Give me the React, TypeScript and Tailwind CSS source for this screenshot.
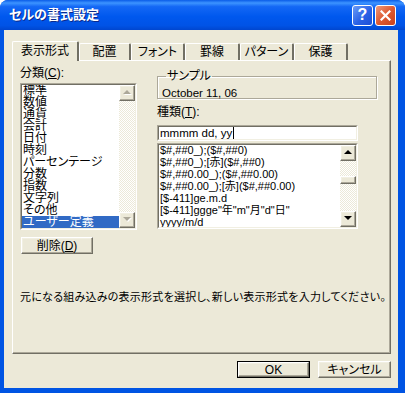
import React from 'react';

const categories = ['標準', '数値', '通貨', '会計', '日付', '時刻', 'パーセンテージ', '分数', '指数', '文字列', 'その他', 'ユーザー定義'];

const formats = [
  '$#,##0_);($#,##0)',
  '$#,##0_);[赤]($#,##0)',
  '$#,##0.00_);($#,##0.00)',
  '$#,##0.00_);[赤]($#,##0.00)',
  '[$-411]ge.m.d',
  '[$-411]ggge"年"m"月"d"日"',
  'yyyy/m/d',
];

const tabs = [
  { label: '配置', w: 'w-[52px]' },
  { label: 'フォント', w: 'w-[54px]' },
  { label: '罫線', w: 'w-[55px]' },
  { label: 'パターン', w: 'w-[54px]' },
  { label: '保護', w: 'w-[54px]' },
];

const raised =
  'bg-[#ECE9D8] border border-t-white border-l-white border-r-[#716F64] border-b-[#716F64] shadow-[inset_-1px_-1px_0_#ACA899,inset_1px_1px_0_#F1EFE2]';

const Arrow = ({ up, disabled }: { up?: boolean; disabled?: boolean }) => (
  <svg width="9" height="6" viewBox="0 0 9 6">
    {disabled && <polygon points={up ? '5,1 9,5 1,5' : '1,1 9,1 5,5'} fill="#ffffff" />}
    <polygon points={up ? '4,0 8,4 0,4' : '0,0 8,0 4,4'} fill={disabled ? '#ACA899' : '#000000'} />
  </svg>
);

const ScrollButton = ({ up, disabled }: { up?: boolean; disabled?: boolean }) => (
  <div className={`${raised} w-[16px] h-[16px] flex items-center justify-center`}>
    <Arrow up={up} disabled={disabled} />
  </div>
);

// classic two-line sunken frame
const Sunken = ({ className, children }: { className: string; children: React.ReactNode }) => (
  <div className={`border border-t-[#ACA899] border-l-[#ACA899] border-r-white border-b-white ${className}`}>
    <div className="w-full h-full border border-t-[#716F64] border-l-[#716F64] border-r-[#F1EFE2] border-b-[#F1EFE2] bg-white flex overflow-hidden">
      {children}
    </div>
  </div>
);

const Track = ({ className }: { className: string }) => (
  <div className={`bg-[repeating-conic-gradient(#ffffff_0%_25%,#ECE9D8_0%_50%)] bg-[length:2px_2px] ${className}`} />
);

export default function App() {
  return (
    <div className="w-[405px] h-[393px] bg-[#0054E3] rounded-t-[8px] flex flex-col overflow-hidden font-['Liberation_Sans','Noto_Sans_CJK_JP',sans-serif] text-[12px] leading-[12px] text-black [font-feature-settings:'palt']">
      {/* Title bar */}
      <div className="h-[30px] flex items-center pl-[9px] pr-[9px] bg-[linear-gradient(to_bottom,#0A5CE8_0%,#3D94FF_10%,#1468F5_22%,#0058EE_55%,#0053E6_85%,#0046CF_100%)]">
        <span className="text-white font-bold text-[13px] leading-[14px] [text-shadow:1px_1px_0_#0A2A8C]">セルの書式設定</span>
        <div className="ml-auto w-[21px] h-[21px] rounded-[3px] border border-white bg-[linear-gradient(135deg,#6C9CF7_0%,#2A62E6_55%,#1C4FD6_100%)] flex items-center justify-center">
          <span className="text-white font-bold text-[16px] leading-[16px] font-['Liberation_Sans',sans-serif]">?</span>
        </div>
        <div className="ml-[2px] w-[21px] h-[21px] rounded-[3px] border border-white bg-[linear-gradient(135deg,#EE9A7C_0%,#DE5A32_50%,#C9411C_100%)] flex items-center justify-center">
          <svg width="11" height="11" viewBox="0 0 11 11">
            <path d="M1.5 1.5 L9.5 9.5 M9.5 1.5 L1.5 9.5" stroke="#ffffff" strokeWidth="2.2" strokeLinecap="square" />
          </svg>
        </div>
      </div>

      {/* Body */}
      <div className="flex-1 ml-[4px] mr-[7px] mb-[5px] bg-[#ECE9D8] flex flex-col pt-[11px] pl-[8px]">
        {/* Tabs */}
        <div className="flex items-end h-[19px]">
          <div className="relative z-10 w-[67px] h-[20px] -mb-[1px] bg-[#ECE9D8] border-l border-t border-white border-r-[2px] border-r-[#716F64] rounded-t-[2px] flex items-center justify-center pb-[2px]">
            表示形式
          </div>
          {tabs.map((t) => (
            <div
              key={t.label}
              className={`${t.w} h-[17px] bg-[#ECE9D8] border-l border-t border-white border-r-[2px] border-r-[#716F64] rounded-t-[2px] flex items-center justify-center`}
            >
              {t.label}
            </div>
          ))}
        </div>

        {/* Panel */}
        <div className="w-[379px] h-[294px] border-l border-t border-white border-r border-b border-r-[#716F64] border-b-[#716F64] shadow-[inset_-1px_-1px_0_#ACA899] flex flex-col pl-[7px]">
          <div className="flex">
            {/* Left column */}
            <div className="w-[117px] flex flex-col">
              <div className="mt-[6px] h-[12px]">
                分類(<span className="underline">C</span>):
              </div>
              <Sunken className="mt-[4px] h-[147px]">
                <div className="flex-1 flex flex-col -mt-[1px]">
                  {categories.map((c) => (
                    <div
                      key={c}
                      className={`h-[12px] pl-[1px] whitespace-nowrap ${c === 'ユーザー定義' ? 'bg-[#316AC5] text-white' : ''}`}
                    >
                      {c}
                    </div>
                  ))}
                </div>
                <div className="w-[16px] flex flex-col">
                  <ScrollButton up disabled />
                  <Track className="flex-1" />
                  <ScrollButton disabled />
                </div>
              </Sunken>
              <div className={`${raised} mt-[7px] ml-[1px] w-[72px] h-[17px] flex items-center justify-center`}>
                削除(<span className="underline">D</span>)
              </div>
            </div>

            {/* Right column */}
            <div className="ml-[20px] w-[220px] flex flex-col">
              <fieldset className="mt-[9px] h-[29px] border border-[#ACA899] shadow-[inset_1px_1px_0_#ffffff,1px_1px_0_#ffffff] pl-[4px]">
                <legend className="ml-[4px] px-[1px] h-[12px]">サンプル</legend>
                <div className="mt-[5px] text-[11.5px] leading-[12px]">October 11, 06</div>
              </fieldset>
              <div className="mt-[7px] h-[12px]">
                種類(<span className="underline">T</span>):
              </div>
              <Sunken className="mt-[7px] w-[201px] h-[16px]">
                <div className="flex items-center pl-[1px] text-[11.5px] leading-[12px]">
                  mmmm dd, yy
                  <span className="ml-[1px] w-[1px] h-[12px] bg-black" />
                </div>
              </Sunken>
              <Sunken className="mt-[2px] w-[201px] h-[86px]">
                <div className="flex-1 flex flex-col -mt-[1px]">
                  {formats.map((f) => (
                    <div key={f} className="h-[12px] pl-[1px] text-[11px] leading-[12px] whitespace-nowrap">
                      {f}
                    </div>
                  ))}
                </div>
                <div className="w-[16px] flex flex-col">
                  <ScrollButton up />
                  <Track className="h-[15px]" />
                  <div className={`${raised} h-[8px]`} />
                  <Track className="flex-1" />
                  <ScrollButton />
                </div>
              </Sunken>
            </div>
          </div>

          <div className="mt-[37px] whitespace-nowrap text-[11px] tracking-[0.25px]">
            元になる組み込みの表示形式を選択し、新しい表示形式を入力してください。
          </div>
        </div>

        {/* Buttons */}
        <div className="flex justify-end gap-[8px] mt-[7px] pr-[7px]">
          <div className="w-[73px] h-[17px] border border-black">
            <div className={`${raised} w-full h-full flex items-center justify-center`}>OK</div>
          </div>
          <div className={`${raised} w-[73px] h-[17px] flex items-center justify-center`}>キャンセル</div>
        </div>
      </div>
    </div>
  );
}
